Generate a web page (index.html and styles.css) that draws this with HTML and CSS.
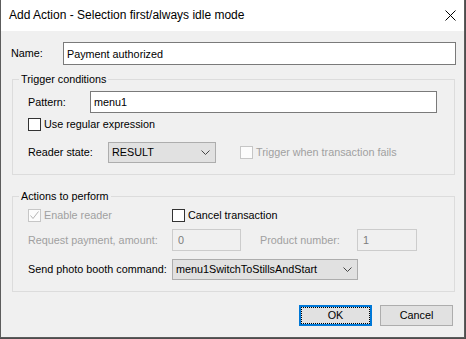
FILE: index.html
```html
<!DOCTYPE html>
<html>
<head>
  <title>Add Action</title>
  <meta name="viewport" content="width=device-width, initial-scale=1.0">
  <link rel="stylesheet" href="styles.css">
</head>
<body>
  <div class="dialog">
    <div class="titlebar">
      <span class="title">Add Action - Selection first/always idle mode</span>
      <svg class="close" width="11" height="11" viewBox="0 0 11 11">
        <path d="M0.5 0.5L10.5 10.5M10.5 0.5L0.5 10.5" stroke="#000" stroke-width="1" fill="none"/>
      </svg>
    </div>

    <div class="client">
      <div class="row name-row">
        <span class="lbl w-name">Name:</span>
        <input class="textbox grow" type="text" value="Payment authorized">
      </div>

      <fieldset class="group">
        <legend>Trigger conditions</legend>
        <div class="group-body">
          <div class="row field-row">
            <span class="lbl w-pattern">Pattern:</span>
            <input class="textbox grow" type="text" value="menu1">
          </div>
          <div class="row check-row first-check">
            <span class="check"></span>
            <span class="check-text">Use regular expression</span>
          </div>
          <div class="row combo-row reader-row">
            <span class="lbl w-reader">Reader state:</span>
            <div class="combo w-result">
              <span>RESULT</span>
              <svg width="9" height="5" viewBox="0 0 9 5"><path d="M0.5 0.5L4.5 4.5L8.5 0.5" stroke="#444" fill="none"/></svg>
            </div>
            <span class="check disabled fail-check"></span>
            <span class="check-text muted">Trigger when transaction fails</span>
          </div>
        </div>
      </fieldset>

      <fieldset class="group actions">
        <legend>Actions to perform</legend>
        <div class="group-body actions-body">
          <div class="row check-row">
            <div class="row col-left">
              <span class="check disabled">
                <svg width="11" height="11" viewBox="0 0 11 11"><path d="M1.5 5.5L4 8.5L9.5 1.5" stroke="#b4b4b4" stroke-width="1" fill="none"/></svg>
              </span>
              <span class="check-text muted">Enable reader</span>
            </div>
            <span class="check"></span>
            <span class="check-text">Cancel transaction</span>
          </div>
          <div class="row field-row amount-row">
            <span class="lbl col-left muted">Request payment, amount:</span>
            <input class="textbox off w-amount" type="text" value="0" disabled>
            <span class="lbl w-product muted">Product number:</span>
            <input class="textbox off w-number" type="text" value="1" disabled>
          </div>
          <div class="row combo-row send-row">
            <span class="lbl col-left">Send photo booth command:</span>
            <div class="combo w-command">
              <span>menu1SwitchToStillsAndStart</span>
              <svg width="9" height="5" viewBox="0 0 9 5"><path d="M0.5 0.5L4.5 4.5L8.5 0.5" stroke="#444" fill="none"/></svg>
            </div>
          </div>
        </div>
      </fieldset>

      <div class="buttons">
        <button class="btn default"><span class="focus">OK</span></button>
        <button class="btn">Cancel</button>
      </div>
    </div>
  </div>
</body>
</html>
```

FILE: styles.css
```css
* {
  margin: 0;
  padding: 0;
  box-sizing: border-box;
}

body {
  background: #4d4d4d;
  font-family: "Liberation Sans", Arial, sans-serif;
  font-size: 10.8px;
  line-height: 13px;
  color: #000;
}

.dialog {
  width: 465px;
  height: 338px;
  background: #f0f0f0;
  border: 1px solid #5c5c5c;
  border-top: 0;
}

.titlebar {
  height: 31px;
  background: #fff;
  display: flex;
  align-items: center;
  padding: 0 8px;
}

.title {
  flex: 1;
  font-size: 12px;
}

.close {
  margin-top: -1px;
}

.client {
  padding: 11px 8px 0 10px;
}

.row {
  display: flex;
  align-items: center;
}

.grow {
  flex: 1;
}

.muted {
  color: #a0a0a0;
}

/* text boxes */
.textbox {
  height: 22px;
  border: 1px solid #7a7a7a;
  background: #fff;
  padding: 0 3px;
  font: inherit;
  color: #000;
  outline: none;
}

.name-row {
  height: 23px;
}

.name-row .textbox {
  height: 23px;
}

.textbox.off {
  border-color: #cccccc;
  background: #f0f0f0;
  color: #7c7c7c;
  padding-left: 5px;
}

.w-name { width: 52px; }
.w-pattern { width: 62px; }
.w-reader { width: 80px; }
.col-left { width: 144px; }
.w-amount { width: 69px; margin-right: 19px; }
.w-product { width: 97px; }
.w-number { width: 60px; }
.w-result { width: 108px; }
.w-command { width: 186px; }

/* group boxes */
.group {
  margin: 8px 1px 0 1px;
  border: 1px solid #dcdcdc;
  padding: 0 0 0 6px;
}

.group legend {
  padding: 0 2px;
  line-height: 13px;
}

.group-body {
  padding: 5px 17px 11px 9px;
}

.actions {
  margin-top: 15px;
}

.actions-body {
  padding-top: 6px;
}

.field-row {
  height: 22px;
}

.combo-row {
  height: 21px;
}

.check-row {
  height: 13px;
}

.first-check {
  margin-top: 5px;
}

.reader-row {
  margin-top: 11px;
}

.amount-row {
  margin-top: 7px;
}

.send-row {
  margin-top: 8px;
}

/* check boxes */
.check {
  width: 13px;
  height: 13px;
  border: 1px solid #333;
  background: #fff;
  margin-right: 3px;
  display: flex;
  align-items: center;
  justify-content: center;
  flex: none;
}

.check.disabled {
  border-color: #c6c6c6;
  background: #fcfcfc;
}

.fail-check {
  margin-left: 24px;
}

/* combo boxes */
.combo {
  height: 21px;
  border: 1px solid #adadad;
  background: #e1e1e1;
  display: flex;
  align-items: center;
  justify-content: space-between;
  padding: 0 5px 0 3px;
}

.combo svg {
  flex: none;
}

/* buttons */
.buttons {
  display: flex;
  justify-content: flex-end;
  gap: 8px;
  margin-top: 13px;
  padding-right: 3px;
}

.btn {
  width: 73px;
  height: 21px;
  border: 1px solid #adadad;
  background: #e1e1e1;
  font: inherit;
  color: #000;
  display: flex;
  align-items: center;
  justify-content: center;
}

.btn.default {
  border: 2px solid #0078d7;
  padding: 0;
}

.btn .focus {
  width: 100%;
  height: 100%;
  border: 1px dotted #000;
  display: flex;
  align-items: center;
  justify-content: center;
}
```
